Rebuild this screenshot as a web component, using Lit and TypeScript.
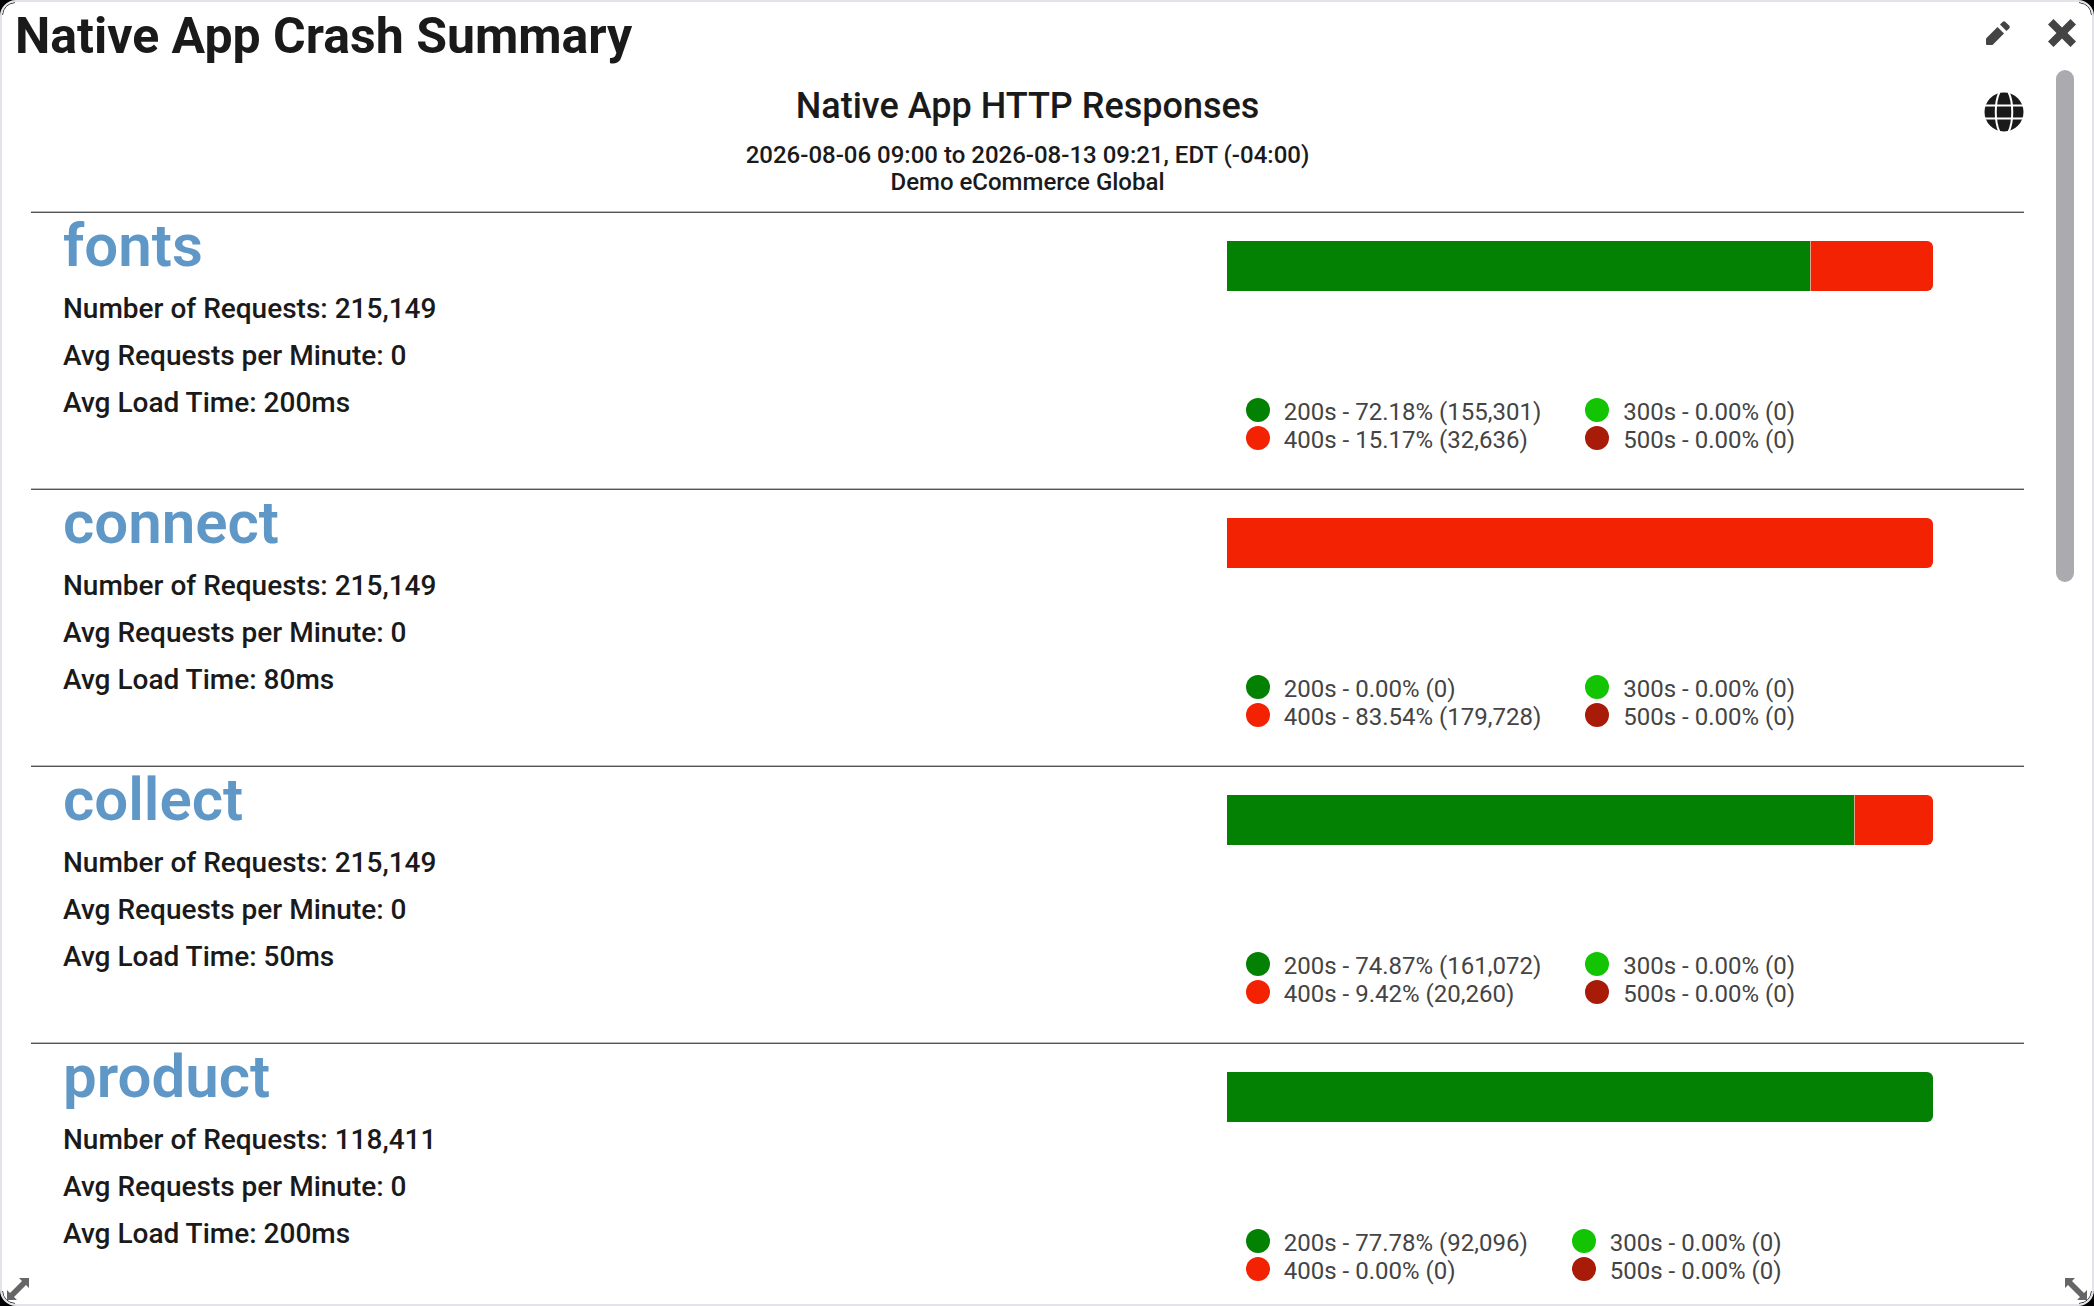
import { LitElement, html, css, svg } from "lit";
import { customElement, property } from "lit/decorators.js";

interface Service {
  name: string;
  requests: number;
  perMinute: number;
  loadTime: string;
  codes: { label: string; kind: string; percent: string; count: number }[];
}

const service = (
  name: string,
  requests: number,
  loadTime: string,
  ok: [string, number],
  bad: [string, number]
): Service => ({
  name,
  requests,
  perMinute: 0,
  loadTime,
  codes: [
    { label: "200s", kind: "ok", percent: ok[0], count: ok[1] },
    { label: "400s", kind: "client", percent: bad[0], count: bad[1] },
    { label: "300s", kind: "redirect", percent: "0.00", count: 0 },
    { label: "500s", kind: "server", percent: "0.00", count: 0 },
  ],
});

const SERVICES: Service[] = [
  service("fonts", 215149, "200ms", ["72.18", 155301], ["15.17", 32636]),
  service("connect", 215149, "80ms", ["0.00", 0], ["83.54", 179728]),
  service("collect", 215149, "50ms", ["74.87", 161072], ["9.42", 20260]),
  service("product", 118411, "200ms", ["77.78", 92096], ["0.00", 0]),
];

const fmt = (n: number) => n.toLocaleString("en-US");

@customElement("service-row")
export class ServiceRow extends LitElement {
  @property({ attribute: false }) service!: Service;

  static styles = css`
    :host {
      display: grid;
      grid-template-columns: 3fr 2fr;
      box-sizing: border-box;
      min-height: 277px;
      border-top: 1px solid #555;
      box-shadow: 0 -1px 0 #b9b9b9;
    }
    .info {
      padding-left: 32px;
    }
    .name {
      margin: 0;
      font-size: 60px;
      line-height: 66px;
      font-weight: 600;
    }
    .name a {
      color: #5f97c6;
      text-decoration: none;
    }
    .stats {
      margin: 6px 0 0;
      padding: 0;
      list-style: none;
      font-size: 28px;
      line-height: 47px;
      font-weight: 500;
    }
    .chart {
      display: flex;
      flex-direction: column;
      gap: 107px;
      padding: 28px 91px 0 0;
    }
    .bar {
      display: flex;
      height: 50px;
      border-radius: 0 6px 6px 0;
      overflow: hidden;
    }
    .seg + .seg {
      box-sizing: border-box;
      border-left: 1px solid #d9a58c;
    }
    .legend {
      display: grid;
      grid-template: repeat(2, 28px) / auto auto;
      grid-auto-flow: column;
      justify-content: start;
      column-gap: 44px;
      margin: 0;
      padding: 0 0 0 19px;
      list-style: none;
      font-size: 24px;
      line-height: 28px;
      color: #444;
    }
    .code {
      display: flex;
      gap: 14px;
    }
    .dot {
      width: 24px;
      height: 24px;
      border-radius: 50%;
    }
    .ok {
      background: #038103;
    }
    .client {
      background: #f32202;
    }
    .redirect {
      background: #13c403;
    }
    .server {
      background: #a81b09;
    }
  `;

  render() {
    const s = this.service;
    const total = s.codes.reduce((sum, c) => sum + c.count, 0);
    return html`
      <div class="info">
        <h3 class="name"><a href="#${s.name}">${s.name}</a></h3>
        <ul class="stats">
          <li>Number of Requests: ${fmt(s.requests)}</li>
          <li>Avg Requests per Minute: ${s.perMinute}</li>
          <li>Avg Load Time: ${s.loadTime}</li>
        </ul>
      </div>
      <div class="chart">
        <div class="bar">
          ${s.codes
            .filter((c) => c.count > 0)
            .map((c) => html`<div class="seg ${c.kind}" style="width:${(c.count / total) * 100}%"></div>`)}
        </div>
        <ul class="legend">
          ${s.codes.map(
            (c) => html`<li class="code">
              <span class="dot ${c.kind}"></span><span>${c.label} - ${c.percent}% (${fmt(c.count)})</span>
            </li>`
          )}
        </ul>
      </div>
    `;
  }
}

const resizeArrow = svg`<path d="M1 23V13l3 3L16 4l-3-3h10v10l-3-3L8 20l3 3z"/>`;

@customElement("app-root")
export class AppRoot extends LitElement {
  static styles = css`
    :host {
      display: block;
      height: 100vh;
      background: #000;
      color: #1a1a1a;
      font-family: Roboto, "Liberation Sans", sans-serif;
    }
    .panel {
      position: relative;
      display: flex;
      flex-direction: column;
      box-sizing: border-box;
      height: 100%;
      border: 2px solid #e4e3e9;
      border-radius: 16px;
      background: #fff;
      overflow: hidden;
    }
    .titlebar {
      display: flex;
      align-items: flex-start;
      justify-content: space-between;
      flex: none;
      height: 68px;
      padding: 0 16px 0 13px;
    }
    .title {
      margin: 0;
      font-size: 50px;
      line-height: 68px;
      font-weight: 700;
    }
    .actions {
      display: flex;
      align-items: center;
      gap: 38px;
      height: 62px;
    }
    button {
      display: block;
      margin: 0;
      padding: 0;
      border: 0;
      background: none;
      color: #444;
      cursor: pointer;
    }
    svg {
      display: block;
      fill: currentColor;
    }
    .viewport {
      display: flex;
      flex: 1;
      min-height: 0;
      padding: 0 18px 0 29px;
      gap: 32px;
      overflow: hidden;
    }
    .content {
      flex: 1;
      min-width: 0;
    }
    .head {
      display: grid;
      grid-template-columns: 40px 1fr 40px;
      min-height: 142px;
      text-align: center;
    }
    .heading {
      grid-column: 2;
    }
    .heading h2 {
      margin: 14px 0 0;
      font-size: 36px;
      line-height: 44px;
      font-weight: 500;
    }
    .heading p {
      margin: 14px 0 0;
      font-size: 24px;
      line-height: 27px;
      font-weight: 500;
    }
    .globe {
      align-self: start;
      margin-top: 22px;
      color: #1a1a1a;
    }
    .track {
      flex: none;
      width: 18px;
    }
    .thumb {
      height: 512px;
      border-radius: 9px;
      background: #ababaf;
    }
    .grip {
      position: absolute;
      bottom: 3px;
      color: #666;
    }
    .left {
      left: 4px;
    }
    .right {
      right: 4px;
      transform: scaleX(-1);
    }
    .corner {
      position: absolute;
      fill: none;
      stroke: #333;
    }
    .tl {
      top: 0;
      left: 0;
    }
    .tr {
      top: 0;
      right: 0;
      transform: scaleX(-1);
    }
    .bl {
      bottom: 0;
      left: 0;
      transform: scaleY(-1);
    }
    .br {
      bottom: 0;
      right: 0;
      transform: scale(-1);
    }
  `;

  render() {
    return html`
      <main class="panel">
        <header class="titlebar">
          <h1 class="title">Native App Crash Summary</h1>
          <div class="actions">
            <button aria-label="Edit">
              <svg width="24" height="24" viewBox="0 0 24 24">
                <path d="M0 17.500V23Q0 24 1 24H6.500L18 12.500 11.500 6z" />
                <path d="M14 3.500l2.600-2.600q1.400-1.400 2.800 0l3.700 3.700q1.400 1.400 0 2.800L20.500 10z" />
              </svg>
            </button>
            <button aria-label="Close">
              <svg width="28" height="28" viewBox="0 0 28 28">
                <path d="M5.500 0L14 8.500 22.500 0 28 5.500 19.500 14 28 22.500 22.500 28 14 19.500 5.500 28 0 22.500 8.500 14 0 5.500z" />
              </svg>
            </button>
          </div>
        </header>
        <div class="viewport">
          <section class="content">
            <div class="head">
              <div class="heading">
                <h2>Native App HTTP Responses</h2>
                <p>2026-08-06 09:00 to 2026-08-13 09:21, EDT (-04:00)<br />Demo eCommerce Global</p>
              </div>
              <button class="globe" aria-label="Open globally">
                <svg width="40" height="40" viewBox="0 0 40 40">
                  <circle cx="20" cy="20" r="19.500" />
                  <g fill="none" stroke="#fff" stroke-width="2">
                    <path d="M0 13.500H40M0 26.500H40" />
                    <path d="M15.500 0C10.500 10 10.500 30 15.500 40M24.500 0C29.500 10 29.500 30 24.500 40" />
                  </g>
                </svg>
              </button>
            </div>
            ${SERVICES.map((s) => html`<service-row .service=${s}></service-row>`)}
          </section>
          <div class="track"><div class="thumb"></div></div>
        </div>
        ${["tl", "tr", "bl", "br"].map(
          (c) => html`<svg class="corner ${c}" width="16" height="16" viewBox="0 0 16 16">
            <path d="M0.500 13Q1.500 2 13 0.500" />
          </svg>`
        )}
        <svg class="grip left" width="24" height="24" viewBox="0 0 24 24">${resizeArrow}</svg>
        <svg class="grip right" width="24" height="24" viewBox="0 0 24 24">${resizeArrow}</svg>
      </main>
    `;
  }
}
